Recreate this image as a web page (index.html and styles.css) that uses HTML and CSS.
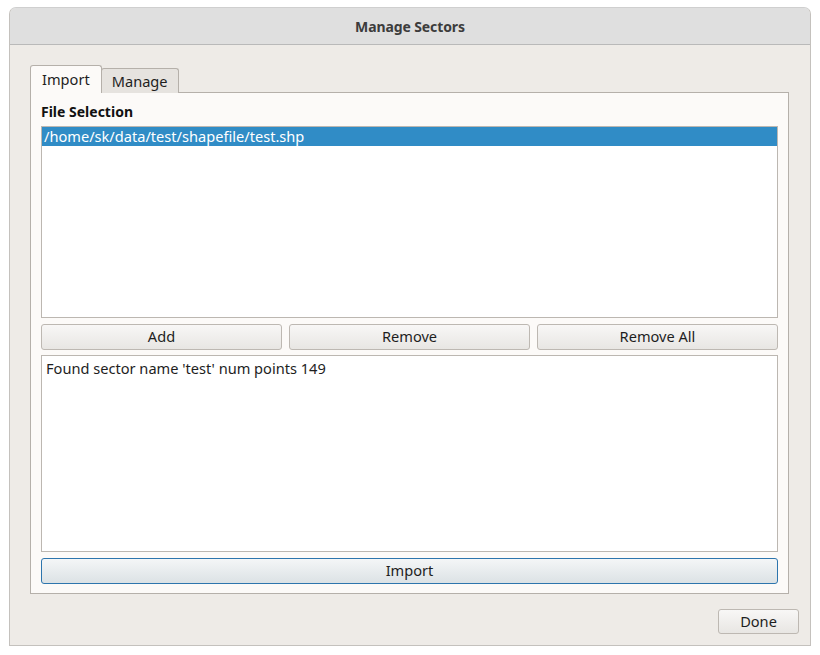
FILE: index.html
```html
<!DOCTYPE html>
<html>
<head>
<meta charset="utf-8">
<link rel="stylesheet" href="styles.css">
</head>
<body>
<div class="window">
  <div class="titlebar">Manage Sectors</div>
  <div class="content">
    <div class="tabs">
      <div class="tab active">Import</div>
      <div class="tab">Manage</div>
    </div>
    <div class="panel">
      <div class="label">File Selection</div>
      <div class="list">
        <div class="row selected">/home/sk/data/test/shapefile/test.shp</div>
      </div>
      <div class="btnrow">
        <button class="btn">Add</button>
        <button class="btn">Remove</button>
        <button class="btn">Remove All</button>
      </div>
      <div class="log">Found sector name 'test' num points 149</div>
      <button class="btn primary">Import</button>
    </div>
    <div class="footer">
      <button class="btn done">Done</button>
    </div>
  </div>
</div>
</body>
</html>
```
FILE: styles.css
```css
* { box-sizing: border-box; }
html, body { margin: 0; padding: 0; background: #ffffff; }
body {
  font-family: "Noto Sans", "DejaVu Sans", sans-serif;
  font-size: 14.6px;
  color: #1e1e1e;
}
.window {
  margin: 7px 0 0 9px;
  width: 802px;
  height: 639px;
  background: #eeebe7;
  border: 1px solid #c4c1bd;
  border-top-color: #cfcfcf;
  border-radius: 7px 7px 0 0;
  display: flex;
  flex-direction: column;
  overflow: hidden;
}
.titlebar {
  height: 37px;
  flex: none;
  background: #dfdfdf;
  border-bottom: 1px solid #b9b9b9;
  display: flex;
  align-items: center;
  justify-content: center;
  font-weight: bold;
  font-size: 14px;
  letter-spacing: -0.1px;
  color: #3c3c3c;
  padding-top: 1px;
}
.content {
  flex: 1;
  display: flex;
  flex-direction: column;
  padding: 21px 21px 0 20px;
}
.tabs {
  display: flex;
  align-items: flex-end;
  height: 27px;
  position: relative;
  z-index: 1;
  margin-bottom: -1px;
}
.tab {
  height: 25px;
  padding: 0 10px 1px 10px;
  border: 1px solid #b5b0aa;
  border-bottom: none;
  border-radius: 3px 3px 0 0;
  background: #e6e3df;
  display: flex;
  align-items: center;
  color: #1e1e1e;
  margin-left: -1px;
}
.tab.active {
  height: 28px;
  background: #fcfaf8;
  margin-left: 0;
  padding: 0 11px 2px 11px;
  border-color: #b5b0aa;
}
.panel {
  background: #fcfaf8;
  border: 1px solid #b5b0aa;
  height: 502px;
  padding: 9px 10px 9px 10px;
  display: flex;
  flex-direction: column;
}
.label {
  font-weight: bold;
  font-size: 14px;
  height: 24px;
  line-height: 19px;
  color: #111;
}
.list {
  height: 192px;
  background: #ffffff;
  border: 1px solid #bcb7b1;
  padding: 0;
}
.row {
  height: 19px;
  line-height: 18px;
  padding-left: 2px;
}
.row.selected {
  background: #308cc6;
  color: #ffffff;
}
.btnrow {
  display: flex;
  gap: 7px;
  margin-top: 6px;
}
.btn {
  font-family: inherit;
  font-size: 14.6px;
  color: #1e1e1e;
  height: 26px;
  border: 1px solid #bdb8b2;
  border-radius: 3px;
  background: linear-gradient(#f8f7f6, #e8e6e3);
  padding: 0 0 2px 0;
}
.btnrow .btn { flex: 1; }
.log {
  margin-top: 5px;
  height: 197px;
  background: #ffffff;
  border: 1px solid #bcb7b1;
  padding: 3px 4px;
  line-height: 19px;
}
.btn.primary {
  margin-top: 6px;
  width: 100%;
  border-color: #2d75ad;
  background: linear-gradient(#f4f6f7, #dce2e5);
}
.footer {
  display: flex;
  justify-content: flex-end;
  padding-top: 15px;
  margin-right: -10px;
}
.btn.done {
  width: 81px;
  height: 25px;
}
```
